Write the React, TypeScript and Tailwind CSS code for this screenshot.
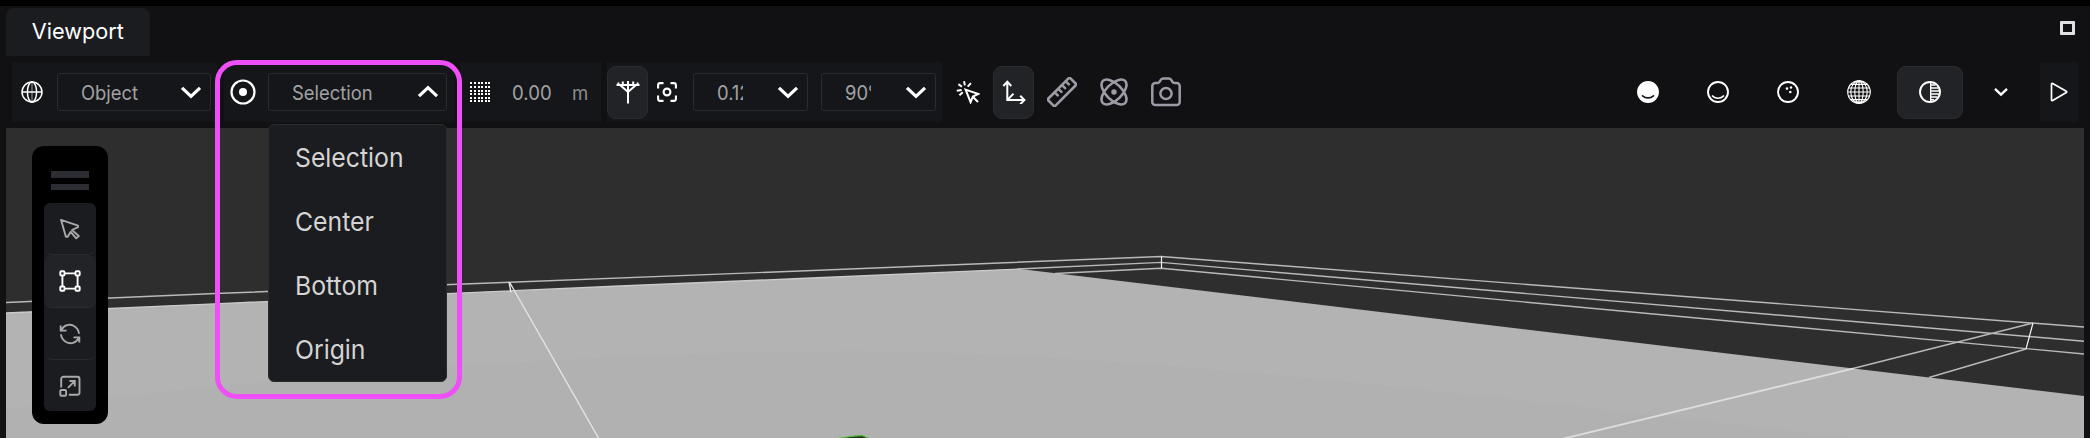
import type { ReactNode } from "react";

function Chevron({ up = false }: { up?: boolean }) {
  return (
    <svg width="22" height="14" viewBox="0 0 22 14" fill="none" stroke="#fff" strokeWidth="3.2" className="shrink-0">
      <path d={up ? "M2 11.2 11 2.6 20 11.2" : "M2 2.8 11 11.4 20 2.8"} />
    </svg>
  );
}

function SelectBox({ label, width, clip = "", up = false }: { label: string; width: string; clip?: string; up?: boolean }) {
  return (
    <div className={`flex h-[38px] shrink-0 items-center justify-between rounded-[3px] border border-[#2a2b2f] pl-[23px] ${up ? "pr-[7px]" : "pr-2"} ${width}`}>
      <div className={`overflow-hidden pt-px whitespace-nowrap ${clip}`}>
        <span className="inline-block origin-left scale-x-[0.92] text-[20px] leading-7 text-[#a2a2a2]">{label}</span>
      </div>
      <Chevron up={up} />
    </div>
  );
}

function Panel({ className, children }: { className: string; children: ReactNode }) {
  return <div className={`flex h-[60px] shrink-0 items-center bg-[#15161a] ${className}`}>{children}</div>;
}

function ActiveButton({ className, children }: { className: string; children: ReactNode }) {
  return (
    <div className={`flex h-[53px] shrink-0 items-center justify-center rounded-[9px] border border-[#2b2c30] bg-[#222327] ${className}`}>
      {children}
    </div>
  );
}

function Globe() {
  return (
    <svg width="22" height="22" viewBox="0 0 22 22" fill="none" stroke="#fff" strokeWidth="1.5">
      <circle cx="11" cy="11" r="10" />
      <ellipse cx="11" cy="11" rx="4.6" ry="10" />
      <path d="M1 11h20" />
      <path d="M11 1v20" strokeWidth="0.9" strokeOpacity="0.65" />
    </svg>
  );
}

function Pivot() {
  return (
    <svg width="26" height="26" viewBox="0 0 26 26" fill="none">
      <circle cx="13" cy="13" r="11.5" stroke="#fff" strokeWidth="2.2" />
      <circle cx="13" cy="13" r="4" fill="#fff" />
    </svg>
  );
}

function DotGrid() {
  const at = [0, 4, 8, 11, 15, 18];
  return (
    <svg width="20" height="20" viewBox="0 0 20 20" fill="#fff" shapeRendering="crispEdges">
      {at.map((y, r) =>
        at.map((x, c) => <rect key={`${r}-${c}`} x={x} y={y} width="2" height="2" />),
      )}
    </svg>
  );
}

function SnapTree() {
  return (
    <svg width="24" height="24" viewBox="0 0 24 24" fill="none" stroke="#fff" strokeWidth="2">
      <path d="M.5 5h23M12 1v22.5M6.8 1.4V5M17.2 1.4V5M2.4 2.4V5M21.6 2.4V5M4 5l8 7 8-7" />
    </svg>
  );
}

function Focus() {
  return (
    <svg width="20" height="20" viewBox="0 0 20 20" fill="none" stroke="#fff" strokeWidth="2.1">
      <path d="M6.5 1.1H3A2 2 0 0 0 1.1 3v3.5M13.5 1.1H17A2 2 0 0 1 18.9 3v3.5M18.9 13.5V17a2 2 0 0 1-1.9 1.9h-3.5M6.5 18.9H3A2 2 0 0 1 1.1 17v-3.5" />
      <circle cx="10" cy="10" r="3.4" />
    </svg>
  );
}

function ClickCursor() {
  return (
    <svg width="24" height="24" viewBox="0 0 24 24" fill="none" stroke="#fff" strokeWidth="2" strokeLinejoin="miter">
      <path d="M9.6 9.6 22.4 14l-5.5 2.5-2.3 5.7z" />
      <path d="m17 17 5 5M8 1.2l.9 4.2M2.4 4.1l3.5 2.7M.8 10.7l4.9-.8M3.4 15.3l3.4-3.1M14.9 3.2l-3.2 3.5" />
    </svg>
  );
}

function Axes() {
  return (
    <svg width="24" height="24" viewBox="0 0 24 24" fill="none" stroke="#fff" strokeWidth="2">
      <path d="M5.3 1.8v18.3h17M1.3 6l4-4.2 4 4.2M18.2 15.8l4.2 4.3-4.2 4.2M5.3 20.1l6.2-6.5" />
    </svg>
  );
}

function Ruler() {
  return (
    <svg width="30" height="30" viewBox="0 0 30 30" fill="none" stroke="#9c9ca6" strokeWidth="2.6" strokeLinejoin="round" strokeLinecap="round">
      <rect x="-.6" y="10" width="31.2" height="10" rx="1.4" transform="rotate(-45 15 15)" />
      <path d="m7.7 15.4 3 3M11.4 11.8l3 3M15.1 8.1l3 3M18.8 4.4l3 3" />
    </svg>
  );
}

function Atom() {
  return (
    <svg width="28" height="28" viewBox="0 0 28 28" fill="none" stroke="#9c9ca6" strokeWidth="2.6">
      <ellipse cx="14" cy="14" rx="15.7" ry="8" transform="rotate(45 14 14)" />
      <ellipse cx="14" cy="14" rx="15.7" ry="8" transform="rotate(-45 14 14)" />
      <circle cx="14" cy="14" r="2.7" fill="#9c9ca6" stroke="none" />
    </svg>
  );
}

function Camera() {
  return (
    <svg width="30" height="30" viewBox="0 0 30 30" fill="none" stroke="#9c9ca6" strokeWidth="2.5" strokeLinejoin="round">
      <path d="M1.3 9a3 3 0 0 1 3-3h2.4c1 0 1.7-.5 2.1-1.4l.6-1.2A3.2 3.2 0 0 1 12.2 1.5h5.6a3.2 3.2 0 0 1 2.8 1.9l.6 1.2c.4.9 1.1 1.4 2.1 1.4h2.4a3 3 0 0 1 3 3v16a3 3 0 0 1-3 3H4.3a3 3 0 0 1-3-3z" />
      <circle cx="15" cy="16.5" r="5.6" />
    </svg>
  );
}

function Ball({ kind }: { kind: "solid" | "matte" | "texture" | "half" }) {
  return (
    <svg width="22" height="22" viewBox="0 0 22 22" fill="none">
      <circle cx="11" cy="11" r="10" stroke="#fff" strokeWidth="1.9" fill={kind === "solid" ? "#fff" : "none"} />
      {kind === "solid" && <path d="M5.5 14.8c3.2 2.7 7.8 2.7 11 0" stroke="#111113" strokeWidth="1.6" strokeLinecap="round" />}
      {kind === "matte" && <path d="M5 14.5c3 3.7 9 3.7 12 0" stroke="#fff" strokeWidth="1.5" />}
      {kind === "texture" && (
        <g fill="#fff">
          <circle cx="10" cy="7.6" r="1.3" />
          <circle cx="14" cy="6.5" r="1.2" />
          <circle cx="13.3" cy="11" r="1.3" />
        </g>
      )}
      {kind === "half" && (
        <>
          <path d="M11.7 1.5v19" stroke="#fff" strokeWidth="1.4" />
          <path d="M12 4h4.6M12 7h7M12 10h8.4M12 13h8M12 16h6.4M12 18.8h3" stroke="#fff" strokeWidth="1.6" />
        </>
      )}
    </svg>
  );
}

function WireGlobe() {
  return (
    <svg width="24" height="24" viewBox="0 0 24 24" fill="none" stroke="#fff" strokeWidth="1.1">
      <circle cx="12" cy="12" r="11.3" />
      <ellipse cx="12" cy="12" rx="8.2" ry="11.3" />
      <ellipse cx="12" cy="12" rx="4.2" ry="11.3" />
      <path d="M12 .7v22.6M.7 12h22.6M1.6 8h20.8M1.6 16h20.8M4 4.4h16M4 19.6h16" />
      <path d="M8 1.8h8M8 22.2h8" strokeWidth="1.6" />
    </svg>
  );
}

function Toolbar() {
  return (
    <div className="flex h-[60px] items-center pr-[6px] pl-[6px]">
      <Panel className="w-[205px] pl-[9px]">
        <Globe />
        <div className="ml-[14px]">
          <SelectBox label="Object" width="w-[154px]" />
        </div>
      </Panel>
      <Panel className="ml-[7px] w-[230px] pl-[5.5px]">
        <Pivot />
        <div className="relative ml-[12.5px]">
          <SelectBox label="Selection" width="w-[179px]" up />
          <Menu />
        </div>
      </Panel>
      <Panel className="ml-[6px] w-[141px] pl-[10px]">
        <DotGrid />
        <div className="ml-[22px] w-[60px] pt-px">
          <span className="inline-block origin-left scale-x-[0.93] text-[20px] text-[#a2a2a2]">0.00</span>
        </div>
        <div className="pt-px">
          <span className="inline-block origin-left scale-x-[0.93] text-[20px] text-[#8c8c8c]">m</span>
        </div>
      </Panel>
      <Panel className="ml-[6px] w-[335px]">
        <ActiveButton className="w-[41px]">
          <SnapTree />
        </ActiveButton>
        <div className="ml-[9px]">
          <Focus />
        </div>
        <div className="ml-4">
          <SelectBox label="0.125" width="w-[115px]" clip="w-[26px]" />
        </div>
        <div className="ml-[13px]">
          <SelectBox label="90°" width="w-[115px]" clip="w-[26px]" />
        </div>
      </Panel>
      <div className="ml-[14px]"><ClickCursor /></div>
      <ActiveButton className="ml-[13px] w-[41px]">
        <Axes />
      </ActiveButton>
      <div className="ml-[13px]"><Ruler /></div>
      <div className="ml-[23px]"><Atom /></div>
      <div className="ml-[23px]"><Camera /></div>
      <div className="ml-auto flex items-center">
        <Ball kind="solid" />
        <div className="ml-12"><Ball kind="matte" /></div>
        <div className="ml-12"><Ball kind="texture" /></div>
        <div className="ml-[48px]"><WireGlobe /></div>
        <ActiveButton className="ml-[26px] w-[66px]">
          <Ball kind="half" />
        </ActiveButton>
        <svg width="14" height="10" viewBox="0 0 14 10" fill="none" stroke="#fff" strokeWidth="2.4" className="ml-[31px]">
          <path d="m1 1.8 6 5.8 6-5.8" />
        </svg>
        <Panel className="ml-[32px] w-[38px] justify-center">
          <svg width="18" height="20" viewBox="0 0 18 20" fill="none" stroke="#fff" strokeWidth="1.7" strokeLinejoin="round">
            <path d="M1.5 2.3c0-.7.6-1 1.2-.7l13.6 7.7c.5.3.5 1 0 1.3L2.7 18.4c-.6.3-1.2 0-1.2-.7z" />
          </svg>
        </Panel>
      </div>
    </div>
  );
}

function Menu() {
  return (
    <ul className="absolute top-[51px] left-0 z-20 w-[179px] rounded-[6px] border border-[#2a2b2f] bg-[#1b1c20]">
      {["Selection", "Center", "Bottom", "Origin"].map((item) => (
        <li key={item} className="flex h-16 items-center pt-px pl-[26px] text-[26px] text-[#d4d4d4]">
          <span className="origin-left scale-x-[0.953]">{item}</span>
        </li>
      ))}
    </ul>
  );
}

function Palette() {
  return (
    <div className="absolute top-[18px] left-[26px] flex h-[278px] w-[76px] flex-col items-center rounded-[12px] bg-black pt-[25px]">
      <div className="h-[7px] w-[38px] bg-[#2b2d32]" />
      <div className="mt-[6px] h-[6px] w-[38px] bg-[#2b2d32]" />
      <div className="mt-[13px] flex w-[52px] flex-col rounded-[6px] bg-[#1b1c20]">
        <div className="flex h-[52px] items-center justify-center rounded-[8px] border-b border-[#292a2e]">
          <svg width="22" height="22" viewBox="0 0 22 22" fill="none" stroke="#a9a9a9" strokeWidth="1.9" strokeLinejoin="round">
            <path d="m2 1.8 17 5.8v1.6L13 12l6.8 6-2.6 2.4-5.5-6.6-3 5H6.9z" />
          </svg>
        </div>
        <div className="flex h-[53px] items-center justify-center rounded-[8px] border-b border-[#2b2c30] bg-[#222327]">
          <svg width="22" height="22" viewBox="0 0 22 22" fill="none" stroke="#fff" strokeWidth="1.9">
            <rect x="1.3" y="1.3" width="4.2" height="4.2" rx="1" />
            <rect x="16.5" y="1.3" width="4.2" height="4.2" rx="1" />
            <rect x="1.3" y="16.5" width="4.2" height="4.2" rx="1" />
            <rect x="16.5" y="16.5" width="4.2" height="4.2" rx="1" />
            <path d="M5.8 3.4h10.4M5.8 18.6h10.4M3.4 5.8v10.4M18.6 5.8v10.4" />
          </svg>
        </div>
        <div className="flex h-[52px] items-center justify-center rounded-[8px] border-b border-[#292a2e]">
          <svg width="22" height="22" viewBox="0 0 22 22" fill="none" stroke="#a9a9a9" strokeWidth="1.9">
            <path d="M1.7 2.6v5h5.8M2.3 7.2C4.8 1.8 10.5.4 15 3c3 1.9 4.8 4.6 5 7.8M20.3 19.4v-5h-5.8M19.7 14.8c-2.5 5.4-8.2 6.8-12.7 4.2-3-1.9-4.8-4.6-5-7.8" />
          </svg>
        </div>
        <div className="flex h-[51px] items-center justify-center">
          <svg width="22" height="22" viewBox="0 0 22 22" fill="none" stroke="#a9a9a9" strokeWidth="1.9">
            <path d="M2.2 12.5V4a2.2 2.2 0 0 1 2.2-2.2h14A2.2 2.2 0 0 1 20.5 4v13.6a2.2 2.2 0 0 1-2.2 2.2h-8.5M9 12.8l6.6-6.6M10.4 6h5.4v5.4" />
            <rect x="1.3" y="15" width="5.8" height="5.8" rx="1" />
          </svg>
        </div>
      </div>
    </div>
  );
}

/* The scene uses window coordinates; its view box starts at the viewport's corner. */
function Scene() {
  return (
    <svg width="2078" height="310" viewBox="6 128 2078 310" fill="none" className="block">
      <path d="M6 313 215 303.8 620 286 800 278.5 1020 269 2084 396V438H6z" fill="#b3b3b3" />
      <path d="M6 409C250 381 560 352 850 351c300 2 640 46 1000 87H6z" fill="#b1b1b1" />
      <path d="M6 313 215 303.8 620 286 800 278.5 1020 269" stroke="#cacaca" strokeWidth="1.3" />
      <g stroke="#b9b9b9" strokeWidth="1.4">
        <path d="M6 302.5 215 293.5 510 282.3 800 271 1161 256.5 2084 327" />
        <path d="M1018 269 1161 262.4 2084 341.2" />
        <path d="M1055 273.5 1161 268.2 2084 354" />
        <path d="M2033 323 1854 368.3M2026 349 1929 377.5" />
      </g>
      <path d="M1161.5 256.5V268M2033 323 2026 349" stroke="#f2f2f2" strokeWidth="1.2" />
      <path d="M509 282l2 10.5M510 283 598.5 438" stroke="#e4e4e4" strokeWidth="1.4" />
      <path d="M1854 368.3 1562 439" stroke="#dddddd" strokeWidth="1.8" />
      <path d="M838 438.5 851 436.5 862 435.5 869 438.5z" fill="#203b17" />
      <path d="M838 438.5 851 436.4 862 435.4 869 438.5" stroke="#58b840" strokeWidth="1.1" />
    </svg>
  );
}

export default function App() {
  return (
    <div className="relative flex h-[438px] w-[2090px] flex-col overflow-hidden border-t-[6px] border-black bg-[#111113] px-[6px] font-['Inter',sans-serif]">
      <header className="flex h-[50px] shrink-0 items-start justify-between pt-[2px]">
        <div className="flex h-12 w-36 items-center justify-center rounded-t-[8px] bg-[#1b1c20] pb-px text-[22px] text-white">
          <span className="scale-x-[0.985]">Viewport</span>
        </div>
        <div className="mt-[13px] mr-[9px] h-[14px] w-[15px] rounded-[1px] border-[3px] border-[#e1e1e1]" />
      </header>
      <div className="mt-[6px] shrink-0">
        <Toolbar />
      </div>
      <main className="relative mt-[6px] h-[310px] shrink-0 bg-[#2e2e2e]">
        <Scene />
        <Palette />
      </main>
      <div className="pointer-events-none absolute top-[54px] left-[215px] z-30 h-[339px] w-[247px] rounded-[22px] border-[5px] border-[#ee4ff8]" />
    </div>
  );
}
